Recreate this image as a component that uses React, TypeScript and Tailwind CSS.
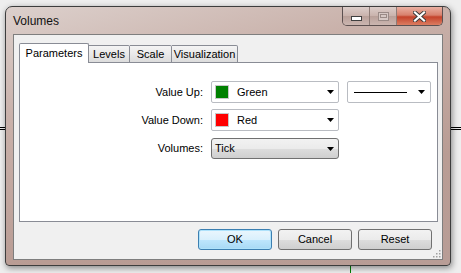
import React from "react";

function Arrow() {
  return (
    <svg width="7" height="4" viewBox="0 0 7 4" className="shrink-0">
      <path d="M0 0h7L3.5 4z" fill="#000" />
    </svg>
  );
}

function ColorSelect({ color, label }: { color: string; label: string }) {
  return (
    <div className="w-[128px] h-[22px] flex items-center pl-[3px] pr-[4px] bg-white border border-[#b9bcc2] rounded-[2px]">
      <span
        className="w-[14px] h-[14px] border border-[#c8c8c8] shrink-0"
        style={{ backgroundColor: color }}
      />
      <span className="ml-[8px] flex-1">{label}</span>
      <Arrow />
    </div>
  );
}

export default function App() {
  const tabs = [
    { label: "Levels", w: "w-[41px]" },
    { label: "Scale", w: "w-[42px]" },
    { label: "Visualization", w: "w-[66px]" },
  ];

  return (
    <div className="relative w-[461px] h-[273px] overflow-hidden bg-[#eeeeee] pl-[5px] pt-[6px] font-['Liberation_Sans',Arial,sans-serif] text-[11px] text-black">
      {/* chart lines behind the window */}
      <div className="absolute left-0 top-[127px] w-full h-px bg-black" />
      <div className="absolute left-0 top-[129px] w-full h-px bg-black" />
      <div className="absolute left-[350px] top-[262px] w-px h-[11px] bg-[#008000]" />

      <div className="relative w-[446px] h-[260px] flex flex-col px-[7px] pb-[7px] border border-[#3d3d3d] rounded-t-[7px] rounded-b-[4px] bg-[linear-gradient(165deg,#dcd0cc_0%,#c9b1aa_30%,#b99c94_70%,#b89d96_100%)] shadow-[1px_2px_6px_rgba(0,0,0,0.45)]">
        {/* title bar */}
        <div className="h-[27px] flex items-start justify-between shrink-0">
          <span className="pt-[6px] leading-[16px] text-[12px] text-[#111]">Volumes</span>
          <div className="flex h-[19px] border border-t-0 border-[#5c5050] rounded-b-[5px] overflow-hidden">
            <div className="w-[27px] flex items-center justify-center bg-[linear-gradient(#dccdc9,#c9b2ac_50%,#b9a099_51%,#cbb6b0)] border-r border-[#8e7c77]">
              <span className="w-[11px] h-[5px] mt-[4px] bg-white border border-[#3f3f3f]" />
            </div>
            <div className="w-[27px] flex items-center justify-center bg-[linear-gradient(#dccdc9,#c9b2ac_50%,#b9a099_51%,#cbb6b0)] border-r border-[#8e7c77]">
              <span className="w-[11px] h-[9px] border border-[#9a8a86] bg-[#d6c8c4] flex items-center justify-center">
                <span className="w-[7px] h-[4px] border border-[#9a8a86]" />
              </span>
            </div>
            <div className="w-[45px] flex items-center justify-center bg-[linear-gradient(#eab0a2,#d8816d_45%,#c4432b_55%,#dc7d61)]">
              <svg width="13" height="11" viewBox="0 0 13 11">
                <path d="M2 1.5l9 8M11 1.5l-9 8" stroke="#3a3a3a" strokeWidth="4" strokeLinecap="square" />
                <path d="M2 1.5l9 8M11 1.5l-9 8" stroke="#fff" strokeWidth="2.2" strokeLinecap="square" />
              </svg>
            </div>
          </div>
        </div>

        {/* client area */}
        <div className="flex-1 flex flex-col bg-[#f0f0f0] border border-[#7e7e7e] pt-[8px] pl-[5px] pr-[5px]">
          <div className="relative z-10 flex items-end h-[20px] -mb-px">
            <div className="w-[70px] h-[20px] flex items-center justify-center bg-white border border-b-0 border-[#898c95] rounded-t-[2px]">
              Parameters
            </div>
            {tabs.map((t) => (
              <div
                key={t.label}
                className={`${t.w} h-[18px] flex items-center justify-center bg-[linear-gradient(#f4f4f4,#e9e9e9_50%,#dcdcdc)] border border-l-0 border-[#898c95] rounded-tr-[2px]`}
              >
                {t.label}
              </div>
            ))}
          </div>

          <div className="h-[160px] w-[419px] bg-white border border-[#898c95] pt-[18px] flex flex-col gap-[6px]">
            <div className="flex items-center h-[22px]">
              <span className="w-[183px] text-right">Value Up:</span>
              <div className="ml-[8px]">
                <ColorSelect color="#008000" label="Green" />
              </div>
              <div className="ml-[8px] w-[84px] h-[22px] flex items-center pl-[6px] pr-[5px] bg-white border border-[#b9bcc2] rounded-[2px]">
                <span className="w-[53px] h-px bg-black" />
                <span className="flex-1" />
                <Arrow />
              </div>
            </div>
            <div className="flex items-center h-[22px]">
              <span className="w-[183px] text-right">Value Down:</span>
              <div className="ml-[8px]">
                <ColorSelect color="#ff0000" label="Red" />
              </div>
            </div>
            <div className="flex items-center h-[21px] mt-[1px]">
              <span className="w-[183px] text-right">Volumes:</span>
              <div className="ml-[8px] w-[128px] h-[21px] flex items-center pl-[3px] pr-[4px] border border-[#707070] rounded-[3px] bg-[linear-gradient(#f2f2f2,#ebebeb_50%,#dddddd_51%,#cfcfcf)]">
                <span className="flex-1">Tick</span>
                <Arrow />
              </div>
            </div>
          </div>

          <div className="flex justify-end gap-[6px] mt-[7px] pr-[5px]">
            <button className="w-[74px] h-[21px] border border-[#3c7fb1] rounded-[3px] bg-[linear-gradient(#eaf6fd,#d9f0fc_50%,#bee6fd_51%,#a7d9f5)] shadow-[inset_0_0_0_1px_#aee2fb]">
              OK
            </button>
            <button className="w-[74px] h-[21px] border border-[#707070] rounded-[3px] bg-[linear-gradient(#f2f2f2,#ebebeb_50%,#dddddd_51%,#cfcfcf)]">
              Cancel
            </button>
            <button className="w-[74px] h-[21px] border border-[#707070] rounded-[3px] bg-[linear-gradient(#f2f2f2,#ebebeb_50%,#dddddd_51%,#cfcfcf)]">
              Reset
            </button>
          </div>

          <div className="flex-1 flex justify-end items-end pb-px -mr-[4px]">
            <svg width="8" height="8" viewBox="0 0 8 8">
              <g fill="#a0a0a0">
                <rect x="6" y="0" width="1.5" height="1.5" />
                <rect x="3" y="3" width="1.5" height="1.5" />
                <rect x="6" y="3" width="1.5" height="1.5" />
                <rect x="0" y="6" width="1.5" height="1.5" />
                <rect x="3" y="6" width="1.5" height="1.5" />
                <rect x="6" y="6" width="1.5" height="1.5" />
              </g>
            </svg>
          </div>
        </div>
      </div>
    </div>
  );
}
